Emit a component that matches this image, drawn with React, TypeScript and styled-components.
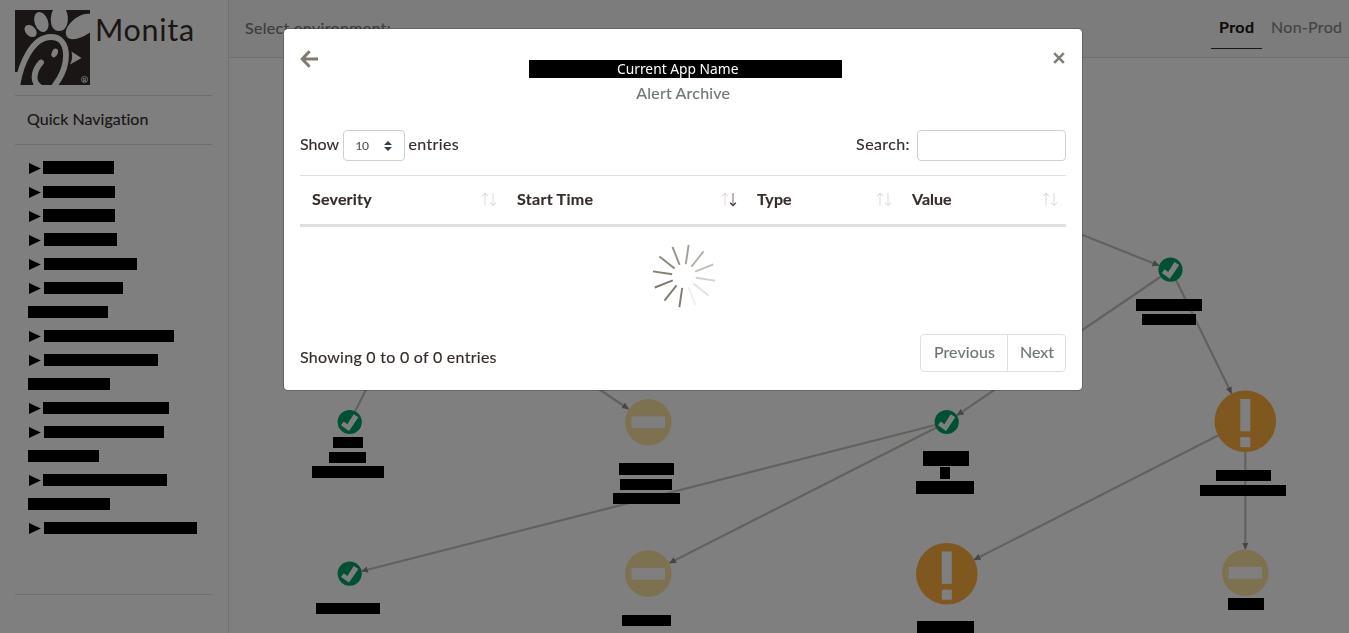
import React from 'react';
import styled, { createGlobalStyle } from 'styled-components';

const GlobalStyle = createGlobalStyle`
  * { box-sizing: border-box; }
  body {
    margin: 0;
    overflow: hidden;
    background: #fff;
    color: #362d2a;
    font: 16px/24px Lato, "Liberation Sans", sans-serif;
    -webkit-text-stroke: 0.15px;
  }
`;

const Page = styled.div`
  display: flex;
  height: 633px;
  width: 100%;
`;

const Sidebar = styled.aside`
  flex: 0 0 229px;
  display: flex;
  flex-direction: column;
  padding: 10px 16px 0 15px;
  border-right: 1px solid #e4e4e4;
`;

const Brand = styled.div`
  display: flex;
  height: 86px;
  border-bottom: 1px solid #dedede;
`;

const BrandName = styled.h1`
  margin: 0 0 0 5px;
  font-size: 30.5px;
  line-height: 38px;
  font-weight: 400;
  letter-spacing: 0.7px;
  -webkit-text-stroke: 0;
`;

const NavHeading = styled.div`
  height: 49px;
  padding: 11px 12px 0;
  letter-spacing: 0.03px;
  border-bottom: 1px solid #dedede;
`;

const NavList = styled.div`
  height: 450px;
  padding: 11px 0 0 13px;
  border-bottom: 1px solid #dedede;
`;

const NavRow = styled.div`
  display: flex;
  align-items: flex-start;
  height: 24px;
`;

const CaretIcon = styled.svg`
  flex: none;
  width: 12px;
  height: 12px;
  margin: 7px 0 0 1px;
`;

const NavBar = styled.span<{ $w: number; $gap: number; $tall?: boolean }>`
  flex: none;
  width: ${(p) => p.$w}px;
  height: ${(p) => (p.$tall ? 13 : 12)}px;
  margin: ${(p) => (p.$tall ? 5 : 6)}px 0 0 ${(p) => p.$gap}px;
  background: #000;
`;

const Main = styled.main`
  flex: 1;
  min-width: 0;
  display: flex;
  flex-direction: column;
`;

const TopBar = styled.header`
  flex: 0 0 58px;
  display: flex;
  justify-content: space-between;
  padding: 8px 0 0 16px;
  background: #f8f8f8;
  border-bottom: 1px solid #dedede;
`;

const EnvLabel = styled.span`
  line-height: 39px;
  color: #7c7672;
  letter-spacing: 0.33px;
`;

const Tabs = styled.nav`
  display: flex;
`;

const Tab = styled.span<{ $active?: boolean }>`
  height: 41px;
  line-height: 38px;
  white-space: nowrap;
  width: ${(p) => (p.$active ? 51 : 87)}px;
  padding-left: ${(p) => (p.$active ? 8 : 9)}px;
  font-weight: ${(p) => (p.$active ? 700 : 400)};
  letter-spacing: ${(p) => (p.$active ? 0.4 : 0.3)}px;
  color: ${(p) => (p.$active ? '#1c1614' : '#8c8784')};
  border-bottom: ${(p) => (p.$active ? '1px solid #362d2a' : '0')};
`;

const Diagram = styled.svg`
  display: block;
  width: 1120px;
  height: 575px;
`;

const Backdrop = styled.div`
  position: fixed;
  inset: 0;
  display: flex;
  justify-content: center;
  align-items: flex-start;
  padding: 28px 0 0 17px;
  background: rgba(0, 0, 0, 0.5);
`;

const Dialog = styled.section`
  width: 800px;
  height: 363px;
  padding: 0 16px;
  background: #fff;
  background-clip: padding-box;
  border: 1px solid rgba(0, 0, 0, 0.2);
  border-radius: 5px;
`;

const DialogHead = styled.div`
  display: flex;
  justify-content: space-between;
  height: 101px;
`;

const BackIcon = styled.svg`
  width: 18px;
  height: 18px;
  margin-top: 20.5px;
`;

const CloseIcon = styled.svg`
  width: 12px;
  height: 12px;
  margin: 22.5px 1.5px 0 0;
`;

const Titles = styled.div`
  padding: 31px 0 0;
  text-align: center;
`;

const AppName = styled.div`
  width: 313px;
  height: 18px;
  padding-right: 15px;
  color: #fff;
  background: #000;
  font: 13.8px/18px "Noto Sans", sans-serif;
  -webkit-text-stroke: 0;
`;

const Subtitle = styled.div`
  margin-top: 3px;
  padding-right: 4px;
  color: #6e7777;
  letter-spacing: 0.2px;
`;

const Controls = styled.div`
  display: flex;
  justify-content: space-between;
  height: 45px;
`;

const Control = styled.div<{ $spacing: number }>`
  display: flex;
  line-height: 28px;
  white-space: nowrap;
  letter-spacing: ${(p) => p.$spacing}px;
`;

const Select = styled.div`
  display: flex;
  align-items: center;
  justify-content: space-between;
  width: 62px;
  height: 31px;
  margin: 0 4px 0 3.5px;
  padding: 0 12px;
  border: 1px solid #ccd2d2;
  border-radius: 4px;
  font-size: 12px;
  letter-spacing: -0.5px;
  color: #5c5552;
`;

const Entries = styled.span`
  letter-spacing: 0.35px;
`;

const SearchInput = styled.input`
  width: 149px;
  height: 31px;
  margin-left: 7px;
  border: 1px solid #ccd2d2;
  border-radius: 4px;
  background: #fff;
`;

const HeadRow = styled.div`
  display: grid;
  grid-template-columns: 205px 240px 155px 166px;
  height: 52px;
  border-top: 1px solid #dde1e1;
  border-bottom: 3px solid #dde1e1;
`;

const HeadCell = styled.div<{ $spacing: number }>`
  display: flex;
  justify-content: space-between;
  padding: 11px 8px 0 12px;
  font-weight: 700;
  letter-spacing: ${(p) => p.$spacing}px;
`;

const Loading = styled.div`
  display: flex;
  justify-content: center;
  height: 107px;
  padding: 16px 0 0 1px;
`;

const Footer = styled.div`
  display: flex;
  justify-content: space-between;
`;

const Info = styled.span`
  padding-top: 11px;
  letter-spacing: 0.27px;
`;

const Pager = styled.div`
  display: flex;
  height: 38px;
  border: 1px solid #dde1e1;
  border-radius: 4px;
  color: #6e7777;
`;

const PageButton = styled.span<{ $w: number; $divided?: boolean }>`
  width: ${(p) => p.$w}px;
  padding-left: 1px;
  text-align: center;
  line-height: 34px;
  letter-spacing: ${(p) => (p.$divided ? 0 : 0.12)}px;
  border-left: ${(p) => (p.$divided ? '1px solid #dde1e1' : '0')};
`;

type Bar = { w: number; wrapped?: boolean; gap?: number; tall?: boolean };

const bars: Bar[] = [
  { w: 71, gap: 2, tall: true },
  { w: 72, gap: 2 },
  { w: 72, gap: 2, tall: true },
  { w: 73, tall: true },
  { w: 93 },
  { w: 79 },
  { w: 80, wrapped: true },
  { w: 130 },
  { w: 114 },
  { w: 82, wrapped: true },
  { w: 126, gap: 2 },
  { w: 120 },
  { w: 71, wrapped: true },
  { w: 124, gap: 2 },
  { w: 82, wrapped: true },
  { w: 153 },
];

const edges = [
  [1000, 202, 1159, 265.5],
  [1161, 276.5, 957, 415.3],
  [1176, 280, 1231.5, 393.5],
  [1218, 435.5, 974, 559.8],
  [1245.3, 451, 1245.3, 549],
  [935.5, 425, 361.5, 571.2],
  [936.5, 427.5, 669.5, 563],
  [560, 363, 628.5, 409],
];

const labels = [
  [1136, 299, 66, 12], [1142, 314, 54, 11],
  [1216, 470, 55, 11], [1200, 485, 86, 11], [1228, 598, 36, 12],
  [333, 437, 30, 11], [329, 452, 37, 11], [312, 466, 72, 12],
  [619, 463, 55, 12], [620, 479, 52, 11], [613, 493, 67, 11],
  [316, 603, 64, 11], [622, 615, 49, 11],
  [923, 451, 46, 15], [940, 467, 10, 12], [916, 481, 58, 13],
  [917, 621, 57, 12],
];

const Caret = () => (
  <CaretIcon viewBox="0 0 12 12">
    <path d="M0 0 11.800 5.500 0 11Z" fill="#000" />
  </CaretIcon>
);

const OkNode = ({ x, y }: { x: number; y: number }) => (
  <g transform={`translate(${x} ${y})`}>
    <circle r="12.1" fill="#00a268" />
    <path d="M4-7.7 8.7-4.7-.7 9-8.7 3.3-6-.4-2.3 2.3Z" fill="#fff" />
  </g>
);

const IdleNode = ({ x, y }: { x: number; y: number }) => (
  <g transform={`translate(${x} ${y})`}>
    <circle r="23.3" fill="#fae49e" />
    <rect x="-16.7" y="-5.8" width="33.4" height="11.8" fill="#fff" />
  </g>
);

const AlertNode = ({ x, y }: { x: number; y: number }) => (
  <g transform={`translate(${x} ${y})`}>
    <circle r="30.8" fill="#ffb040" />
    <rect x="-5" y="-22.2" width="10" height="32.3" fill="#fff" />
    <rect x="-5" y="16" width="10" height="10" fill="#fff" />
  </g>
);

const Logo = () => (
  <svg width="75" height="75" viewBox="0 0 75 75">
    <rect width="75" height="75" fill="#342c2a" />
    <g fill="#fff">
      <ellipse cx="15.600" cy="21" rx="5" ry="7" transform="rotate(-45 15.600 21)" />
      <ellipse cx="26.300" cy="12" rx="6.700" ry="10.300" transform="rotate(-20 26.300 12)" />
      <path d="M38 0C34 8 35 21 44 21C53.500 21 54.500 7 51 0Z" />
      <path d="M75 4C64 2 47 17 51.500 26C55 32.500 67 28 75 22.500Z" />
      <ellipse cx="39.700" cy="43" rx="3" ry="4.500" transform="rotate(22 39.700 43)" />
      <path d="M56.500 41.500 66.500 48 55 54.500C57.500 50 57.500 46 56.500 41.500Z" />
    </g>
    <path
      d="M2 78C5 55 17 27 36 27C55 27 54 53 43.500 70L36 81M29 79C14 74 20 59 26 52.500"
      fill="none" stroke="#fff" strokeWidth="5.800" strokeLinecap="round"
    />
    <path d="M0 62V75H5L6 62Z" fill="#fff" />
    <circle cx="69.500" cy="69.500" r="3.100" fill="none" stroke="#fff" strokeWidth=".8" />
    <text x="69.500" y="71.500" fill="#fff" stroke="none" fontSize="5.500" fontWeight="700" textAnchor="middle">R</text>
  </svg>
);

const SortIcon = ({ down }: { down?: boolean }) => (
  <svg width="16" height="24" viewBox="0 0 16 24" fill="none">
    <path d="M4 6.500V18.500" stroke="#ebe9e7" strokeWidth="1.600" />
    <path d="M1.200 9 4 6.300 6.800 9" stroke="#cfcac7" />
    <path d="M12 6V17.500" stroke={down ? '#aaa5a2' : '#ebe9e7'} strokeWidth="1.600" />
    <path d="M9.200 15.800 12 18.500 14.800 15.800" stroke={down ? '#413936' : '#cfcac7'} strokeWidth={down ? 1.4 : 1} />
  </svg>
);

const spokes = [0.72, 0.6, 0.47, 0.34, 0.22, 0.11, 1, 1, 1, 0.96, 0.9, 0.82];

const Spinner = () => (
  <svg width="66" height="66" viewBox="-33 -33 66 66">
    {spokes.map((opacity, i) => (
      <path
        key={i}
        d="M0-12V-31.400"
        stroke="#817a6e"
        strokeWidth="1.900"
        opacity={opacity}
        transform={`rotate(${8.5 + i * 30})`}
      />
    ))}
  </svg>
);

export default function App() {
  return (
    <>
      <GlobalStyle />
      <Page>
        <Sidebar>
          <Brand>
            <Logo />
            <BrandName>Monita</BrandName>
          </Brand>
          <NavHeading>Quick Navigation</NavHeading>
          <NavList>
            {bars.map((b, i) => (
              <NavRow key={i}>
                {!b.wrapped && <Caret />}
                <NavBar $w={b.w} $gap={b.wrapped ? 0 : b.gap ?? 3} $tall={b.tall} />
              </NavRow>
            ))}
          </NavList>
        </Sidebar>
        <Main>
          <TopBar>
            <EnvLabel>Select environment:</EnvLabel>
            <Tabs>
              <Tab $active>Prod</Tab>
              <Tab>Non-Prod</Tab>
            </Tabs>
          </TopBar>
          <Diagram viewBox="229 58 1120 575">
            <defs>
              <marker id="arrow" viewBox="0 0 7 7" refX="6.500" refY="3.500" markerWidth="7" markerHeight="7" markerUnits="userSpaceOnUse" orient="auto">
                <path d="M0 .2 7 3.500 0 6.800Z" fill="#8e8c8a" />
              </marker>
            </defs>
            {edges.map(([x1, y1, x2, y2], i) => (
              <line key={i} x1={x1} y1={y1} x2={x2} y2={y2} stroke="#c4c2bc" strokeWidth="2.200" markerEnd="url(#arrow)" />
            ))}
            <line x1="376" y1="370" x2="355" y2="411.500" stroke="#c4c2bc" strokeWidth="2.200" />
            <OkNode x={1170.5} y={269.7} />
            <OkNode x={349.7} y={422} />
            <OkNode x={349.7} y={573.6} />
            <OkNode x={946.7} y={422} />
            <IdleNode x={648.3} y={422.2} />
            <IdleNode x={648.3} y={573.6} />
            <IdleNode x={1245.3} y={572.7} />
            <AlertNode x={1245.3} y={421.2} />
            <AlertNode x={946.8} y={573.7} />
            {labels.map(([x, y, w, h], i) => (
              <rect key={i} x={x} y={y} width={w} height={h} fill="#000" />
            ))}
          </Diagram>
        </Main>
      </Page>
      <Backdrop>
        <Dialog>
          <DialogHead>
            <BackIcon viewBox="0 0 18 18" fill="none" stroke="#817a6e" strokeWidth="3">
              <path d="M9.600 1.200 2.200 9 9.600 16.800M2.500 9H18" />
            </BackIcon>
            <Titles>
              <AppName>Current App Name</AppName>
              <Subtitle>Alert Archive</Subtitle>
            </Titles>
            <CloseIcon viewBox="0 0 12 12" stroke="#817c76" strokeWidth="2.500">
              <path d="M1.200 1.200 10.800 10.800M10.800 1.200 1.200 10.800" />
            </CloseIcon>
          </DialogHead>
          <Controls>
            <Control $spacing={0}>
              Show
              <Select>
                10
                <svg width="8" height="10" viewBox="0 0 8 10" fill="#343f47">
                  <path d="M0 4 4 0 8 4ZM0 6H8L4 10Z" />
                </svg>
              </Select>
              <Entries>entries</Entries>
            </Control>
            <Control $spacing={0.4}>
              Search:
              <SearchInput />
            </Control>
          </Controls>
          <HeadRow>
            <HeadCell $spacing={0.2}>Severity<SortIcon /></HeadCell>
            <HeadCell $spacing={0.3}>Start Time<SortIcon down /></HeadCell>
            <HeadCell $spacing={0.1}>Type<SortIcon /></HeadCell>
            <HeadCell $spacing={0}>Value<SortIcon /></HeadCell>
          </HeadRow>
          <Loading>
            <Spinner />
          </Loading>
          <Footer>
            <Info>Showing 0 to 0 of 0 entries</Info>
            <Pager>
              <PageButton $w={86}>Previous</PageButton>
              <PageButton $w={58} $divided>Next</PageButton>
            </Pager>
          </Footer>
        </Dialog>
      </Backdrop>
    </>
  );
}
